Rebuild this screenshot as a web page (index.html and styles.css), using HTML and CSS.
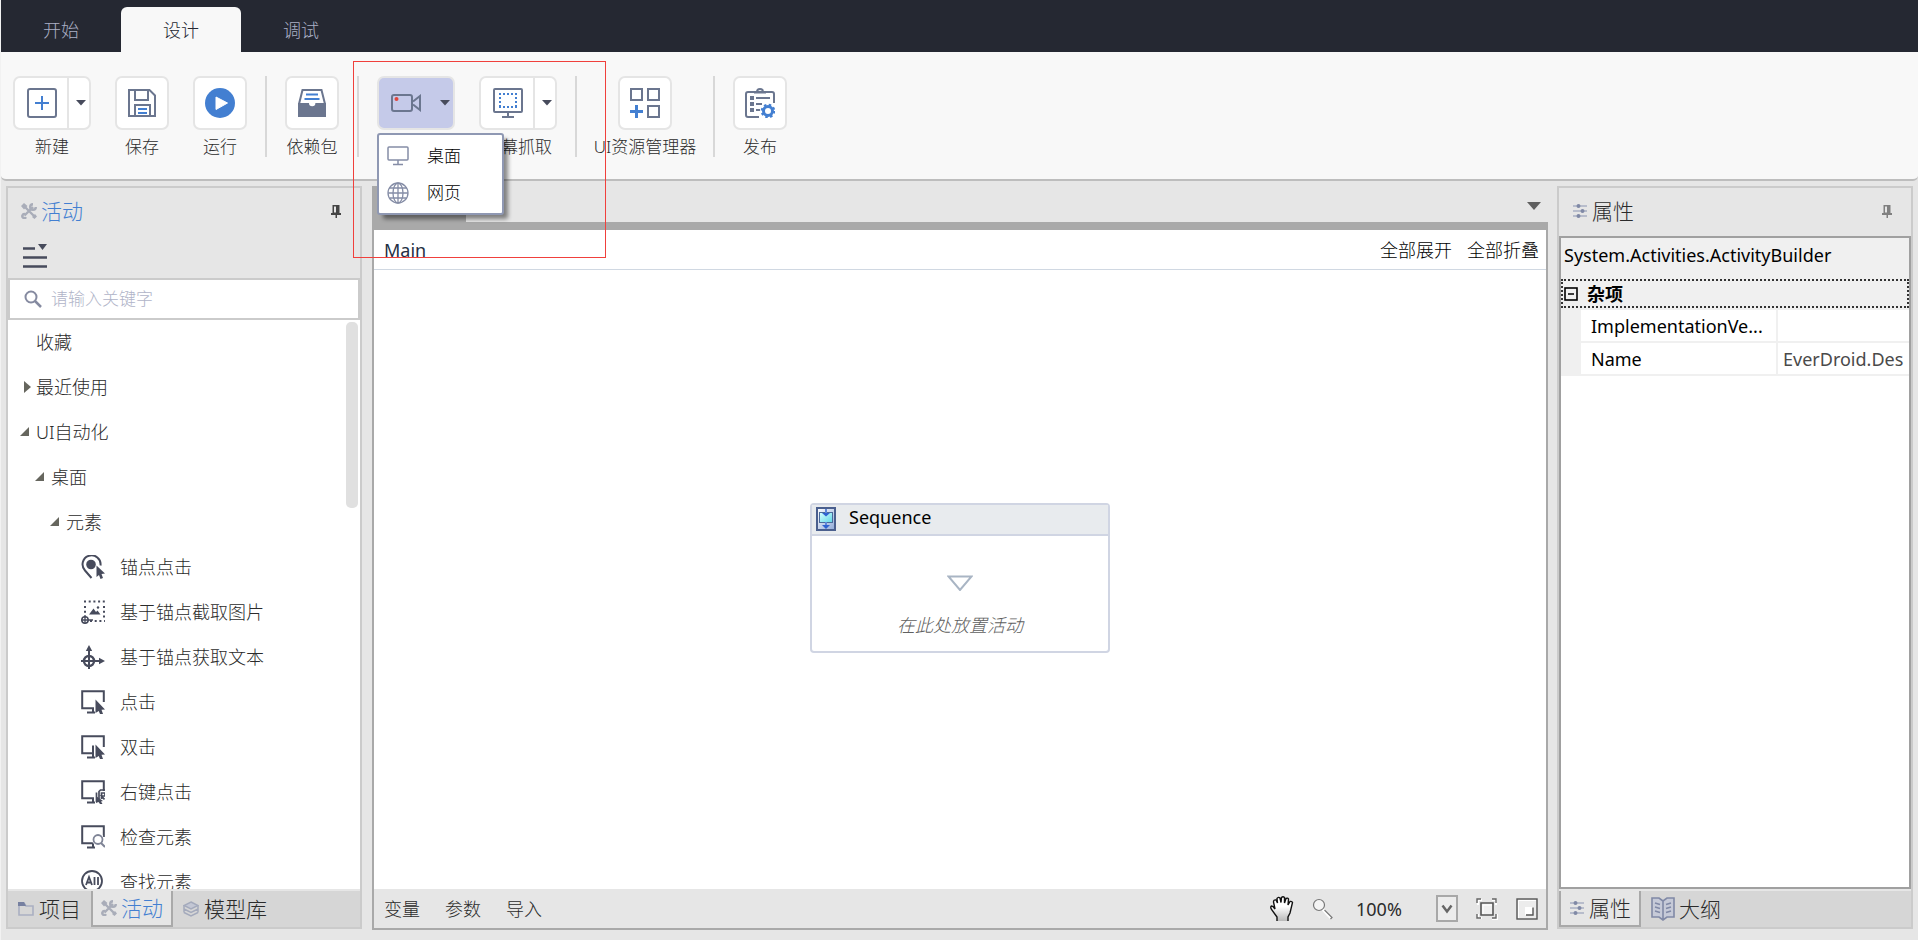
FILE: index.html
```
<!DOCTYPE html>
<html lang="zh-CN">
<head>
<meta charset="utf-8">
<meta name="viewport" content="width=device-width, initial-scale=1">
<title>Main</title>
<link rel="stylesheet" href="styles.css">
</head>
<body>
<svg class="defs" aria-hidden="true">
  <symbol id="i-tools" viewBox="0 0 16 16">
    <path d="M3.500 3.500 13 13M3.500 12.500 12 4" fill="none" stroke="currentColor" stroke-width="2.400"/>
    <path d="M0 3 3 0 6.500 3 3 6.500z M11 14 14 11 16 13.500 13.500 16z" fill="currentColor"/>
    <path d="M12 1.200a2.800 2.800 0 1 0 2.800 2.800M4 11.200a2 2 0 1 0 1 3" fill="none" stroke="currentColor" stroke-width="2.400"/>
  </symbol>
  <symbol id="i-sliders" viewBox="0 0 16 16">
    <path d="M1 3h14M1 8h14M1 13h14" stroke="#a9b0c4" stroke-width="1.500"/>
    <path d="M4.500 3a2 2 0 1 0 4 0 2 2 0 1 0-4 0M8.500 8a2 2 0 1 0 4 0 2 2 0 1 0-4 0M4.500 13a2 2 0 1 0 4 0 2 2 0 1 0-4 0" fill="#8089a6"/>
  </symbol>
  <symbol id="i-pin" viewBox="0 0 10 13">
    <path d="M1.500 0h7v8H10v2H6v3H4.500v-3H0V8h1.500z" fill="currentColor"/>
    <path d="M3 1.500h2v6H3z" fill="#e6e6e6"/>
  </symbol>
  <symbol id="i-screen" viewBox="0 0 24 24">
    <path d="M13 18.200H1.200V1.200h21.600V12M12 18v4M6 22.500h8" fill="none" stroke="currentColor" stroke-width="2"/>
  </symbol>
  <symbol id="i-caret" viewBox="0 0 10 6"><path d="M0 0h10L5 5.500z" fill="#474b5c"/></symbol>
</svg>

<div class="app">
  <nav class="tabs" aria-label="主菜单">
    <button class="tab" type="button">开始</button>
    <button class="tab tab-active" type="button">设计</button>
    <button class="tab" type="button">调试</button>
  </nav>

  <header class="ribbon">
    <div class="tool-group">
      <div class="tool">
        <div class="tile split">
          <button class="tile-main" type="button" aria-label="新建">
            <svg width="30" height="30" viewBox="0 0 30 30"><rect x="1" y="1" width="28" height="28" rx="2" fill="none" stroke="#6b768f" stroke-width="2"/><path d="M15 8v14M8 15h14" stroke="#437fd1" stroke-width="2"/></svg>
          </button>
          <button class="tile-drop" type="button" aria-label="新建选项"><svg width="10" height="6"><use href="#i-caret"/></svg></button>
        </div>
        <span class="tool-label">新建</span>
      </div>
      <button class="tool" type="button">
        <span class="tile">
          <svg width="28" height="28" viewBox="0 0 28 28" fill="none" stroke="#6b768f" stroke-width="2"><path d="M1 1h20.500L27 6.500V27H1z"/><path d="M7 1v10h13V1M7 27V16h15v11"/><path d="M10 20h9M10 24h9" stroke="#437fd1"/></svg>
        </span>
        <span class="tool-label">保存</span>
      </button>
      <button class="tool" type="button">
        <span class="tile">
          <svg width="30" height="30" viewBox="0 0 30 30"><circle cx="15" cy="15" r="15" fill="#437fd1"/><path d="M11 9v12.500L22.500 15z" fill="#fff" stroke="#fff" stroke-linejoin="round"/></svg>
        </span>
        <span class="tool-label">运行</span>
      </button>
    </div>
    <div class="tool-group">
      <button class="tool" type="button">
        <span class="tile">
          <svg width="28" height="28" viewBox="0 0 28 28"><path d="M1 15 4.500 1h19L27 15" fill="none" stroke="#6b768f" stroke-width="2"/><path d="M8 5.500h12M6.500 10h15" stroke="#437fd1" stroke-width="2"/><path d="M0 14h11a3.200 3.200 0 0 0 6.400 0H28v14H0z" fill="#6b768f"/></svg>
        </span>
        <span class="tool-label">依赖包</span>
      </button>
    </div>
    <div class="tool-group">
      <div class="tool tool-open">
        <div class="tile split tile-on">
          <button class="tile-main" type="button" aria-label="录制">
            <svg width="30" height="18" viewBox="0 0 30 18" fill="none" stroke="#6b768f" stroke-width="2"><rect x="1" y="1" width="20" height="16" rx="2"/><path d="M22 7.500 29 2v14l-7-5.500"/><circle cx="5.500" cy="5" r="2" fill="#e0453c" stroke="none"/></svg>
          </button>
          <button class="tile-drop" type="button" aria-label="录制选项" aria-expanded="true"><svg width="10" height="6"><use href="#i-caret"/></svg></button>
        </div>
        <div class="menu" role="menu">
          <button class="menu-item" type="button" role="menuitem">
            <svg width="22" height="20" viewBox="0 0 22 20" fill="none" stroke="#858da6" stroke-width="1.500"><rect x="1" y="1" width="20" height="13" rx="1"/><path d="M11 14v4M6 18.500h10"/></svg>
            桌面
          </button>
          <button class="menu-item" type="button" role="menuitem">
            <svg width="22" height="22" viewBox="0 0 22 22" fill="none" stroke="#858da6" stroke-width="1.300"><circle cx="11" cy="11" r="10"/><ellipse cx="11" cy="11" rx="5" ry="10"/><path d="M11 1v20M1 11h20M2.500 6h17M2.500 16h17"/></svg>
            网页
          </button>
        </div>
      </div>
      <div class="tool">
        <div class="tile split">
          <button class="tile-main" type="button" aria-label="屏幕抓取">
            <svg width="30" height="30" viewBox="0 0 30 30" fill="none" stroke="#6b768f" stroke-width="2"><rect x="1" y="1" width="28" height="23" rx="1"/><path d="M15 24v5M9 29h12"/><path d="M6 6h18M6 19h18" stroke="#437fd1" stroke-dasharray="2 2"/><path d="M7 9v9M23 9v9" stroke="#437fd1" stroke-dasharray="2 2"/></svg>
          </button>
          <button class="tile-drop" type="button" aria-label="屏幕抓取选项"><svg width="10" height="6"><use href="#i-caret"/></svg></button>
        </div>
        <span class="tool-label">屏幕抓取</span>
      </div>
    </div>
    <div class="tool-group">
      <button class="tool tool-wide" type="button">
        <span class="tile">
          <svg width="30" height="30" viewBox="0 0 30 30" fill="none" stroke="#6b768f" stroke-width="2"><path d="M1 1h11v11H1zM18 1h11v11H18zM18 18h11v11H18z"/><path d="M6.500 17v13M0 23.500h13" stroke="#437fd1" stroke-width="3"/></svg>
        </span>
        <span class="tool-label">UI资源管理器</span>
      </button>
    </div>
    <div class="tool-group">
      <button class="tool" type="button">
        <span class="tile">
          <svg width="30" height="30" viewBox="0 0 30 30" fill="none" stroke="#6b768f" stroke-width="2"><path d="M14 29H3a2 2 0 0 1-2-2V6a2 2 0 0 1 2-2h24a2 2 0 0 1 2 2v9"/><path d="M9 4.500h12M12 4a3 3 0 0 1 6 0"/><path d="M5 10h4M5 16h4M5 22h4" stroke-width="4"/><path d="M11 10h14M11 16h6M11 22h4"/><circle cx="23" cy="23" r="4.500" stroke="#437fd1" stroke-width="3"/><circle cx="23" cy="23" r="6.300" stroke="#437fd1" stroke-width="2" stroke-dasharray="2.500 2.450"/></svg>
        </span>
        <span class="tool-label">发布</span>
      </button>
    </div>
  </header>

  <div class="workspace">
    <aside class="panel side-left">
      <div class="panel-head">
        <svg class="tools-icon" width="16" height="16"><use href="#i-tools"/></svg>
        <h2 class="panel-title title-on">活动</h2>
        <button class="pin" type="button" aria-label="固定"><svg width="10" height="13"><use href="#i-pin"/></svg></button>
      </div>
      <button class="filter" type="button" aria-label="筛选">
        <svg width="24" height="24" viewBox="0 0 24 24"><path d="M0 4.500h12M0 13.500h24M0 22.500h24" stroke="#474b5c" stroke-width="2.500"/><path d="M15 0h9l-4.500 6z" fill="#474b5c"/></svg>
      </button>
      <label class="search">
        <svg width="18" height="18" viewBox="0 0 18 18" fill="none" stroke="#858aa0"><circle cx="7" cy="7" r="5.500" stroke-width="2"/><path d="M11 11l6 6" stroke-width="2.500"/></svg>
        <input class="search-input" type="search" placeholder="请输入关键字" aria-label="请输入关键字">
      </label>
      <div class="tree-wrap">
        <ul class="tree">
          <li><button class="node" type="button"><span class="twist"></span>收藏</button></li>
          <li><button class="node" type="button"><span class="twist closed"></span>最近使用</button></li>
          <li><button class="node" type="button"><span class="twist open"></span>UI自动化</button></li>
          <li><button class="node level-2" type="button"><span class="twist open"></span>桌面</button></li>
          <li><button class="node level-3" type="button"><span class="twist open"></span>元素</button></li>
          <li><button class="node leaf" type="button">
            <svg width="24" height="24" viewBox="0 0 24 24"><path d="M10.500 23 4 15.500a9 9 0 1 1 15.500-5" fill="none" stroke="#474b5c" stroke-width="2"/><circle cx="10" cy="9.500" r="4.800" fill="#474b5c"/><path d="M15.500 10.500l8.500 8-3.500.5 1.500 4-2.500 1-1.500-4-2.500 2z" fill="#474b5c"/></svg>锚点点击</button></li>
          <li><button class="node leaf" type="button">
            <svg width="24" height="24" viewBox="0 0 24 24" fill="none" stroke="#474b5c"><path d="M3 1.500h21M9 21h15" stroke-width="2" stroke-dasharray="2 2.700"/><path d="M4 6v12M23 6v12" stroke-width="2" stroke-dasharray="2 2.700"/><circle cx="4" cy="20" r="3.200" stroke-width="1.500"/><path d="M0 20h12M4 15.500V24" stroke-width="1.300"/><path d="M8 14.500l4.500-6 2.500 3.500 1.500-1.500 3 4z" fill="#474b5c" stroke="none"/><circle cx="17" cy="7.500" r="1.200" fill="#474b5c" stroke="none"/></svg>基于锚点截取图片</button></li>
          <li><button class="node leaf" type="button">
            <svg width="24" height="24" viewBox="0 0 24 24" fill="none" stroke="#474b5c" stroke-width="2.400"><circle cx="8" cy="16" r="5"/><path d="M8 4v20M0 16h18" stroke-width="2"/><path d="M8 0l3.200 6H4.800zM24 16l-6 3.200v-6.400z" fill="#474b5c" stroke="none"/></svg>基于锚点获取文本</button></li>
          <li><button class="node leaf" type="button">
            <svg class="ink" width="24" height="24" viewBox="0 0 24 24"><use href="#i-screen"/><path d="M14.500 9.500 24 19.500l-3.500.3L22 24h-3l-1.300-3-3.200 2z" fill="#474b5c"/></svg>点击</button></li>
          <li><button class="node leaf" type="button">
            <svg class="ink" width="24" height="24" viewBox="0 0 24 24"><use href="#i-screen"/><path d="M12 10.500v11" stroke="#474b5c" stroke-width="2"/><path d="M14.500 9.500 24 19.500l-3.500.3L22 24h-3l-1.300-3-3.200 2z" fill="#474b5c"/></svg>双击</button></li>
          <li><button class="node leaf" type="button">
            <svg class="ink" width="24" height="24" viewBox="0 0 24 24"><use href="#i-screen"/><path d="M14 11h10v13H14z" fill="#fff"/><path d="M15.500 22v-9.500M18 21v-9.500l1.500-1.500H24M20.500 19v-6H24v3h-3.500l3 3.500" fill="none" stroke="#474b5c" stroke-width="1.700"/><path d="M15 16l7 5-2 .5 1.500 2.500h-2.500L17.500 22 15 23z" fill="#474b5c"/></svg>右键点击</button></li>
          <li><button class="node leaf" type="button">
            <svg class="ink" width="24" height="24" viewBox="0 0 24 24"><use href="#i-screen"/><circle cx="17" cy="14.500" r="6" fill="#fff"/><circle cx="17" cy="14.500" r="4.500" fill="none" stroke="#7f8496" stroke-width="1.800"/><path d="M20 18l4 4" stroke="#7f8496" stroke-width="2"/></svg>检查元素</button></li>
          <li><button class="node leaf" type="button">
            <svg width="24" height="24" viewBox="0 0 24 24" fill="none" stroke="#474b5c" stroke-width="1.800"><circle cx="11" cy="11" r="10"/><path d="M5 15l3-8 3 8M6.200 12.500h3.600M13.500 7v8M17 7v8"/></svg>查找元素</button></li>
        </ul>
        <span class="thumb"></span>
      </div>
      <div class="dock">
        <button class="dock-tab" type="button"><svg width="16" height="14" viewBox="0 0 16 14" fill="none"><path d="M1 2v11h14V4H8L6 1H1z" stroke="#aab0c2" stroke-width="1.600"/><path d="M0 0h6l2 4H0z" fill="#7680a0"/></svg>项目</button>
        <button class="dock-tab dock-on title-on" type="button"><svg class="tools-icon" width="16" height="16"><use href="#i-tools"/></svg>活动</button>
        <button class="dock-tab" type="button"><svg width="16" height="16" viewBox="0 0 16 16" fill="none" stroke="#a4aabc" stroke-width="1.500"><path d="M8 1l7 3.500L8 8 1 4.500z" fill="#c3c7d4"/><path d="M1 8l7 3.500L15 8M1 11.500 8 15l7-3.500M1 4.500v7M15 4.500v7"/></svg>模型库</button>
      </div>
    </aside>

    <main class="editor">
      <div class="doc-strip">
        <span class="doc-tab"></span>
        <button class="doc-list" type="button" aria-label="文档列表"><svg width="14" height="8" viewBox="0 0 14 8"><path d="M0 0h14L7 8z" fill="#606060"/></svg></button>
      </div>
      <div class="doc">
        <div class="crumbs">
          <span class="crumb">Main</span>
          <button class="crumb-btn" type="button">全部展开</button>
          <button class="crumb-btn" type="button">全部折叠</button>
        </div>
        <div class="canvas">
          <section class="seq">
            <h3 class="seq-head">
              <svg width="20" height="24" viewBox="0 0 20 24"><defs><linearGradient id="g1" x1="0" y1="0" x2="1" y2="1"><stop offset="0" stop-color="#fff"/><stop offset="1" stop-color="#8fa9d8"/></linearGradient><linearGradient id="g2" x1="0" y1="0" x2="1" y2="1"><stop offset="0" stop-color="#d8ffff"/><stop offset="1" stop-color="#5fd6e6"/></linearGradient></defs><rect x="1" y="1" width="18" height="22" fill="url(#g1)" stroke="#4a5f8e" stroke-width="2"/><rect x="3.500" y="5.500" width="13" height="10" fill="url(#g2)" stroke="#4a6a9a"/><path d="M10 2v5M10 15v4" stroke="#5f86d8" stroke-width="2"/><path d="M6 6h8l-4 3.500zM6 18h8l-4 4z" fill="#2f62d0"/></svg>
              Sequence
            </h3>
            <div class="seq-body">
              <svg width="26" height="16" viewBox="0 0 26 16"><path d="M1.500 1.500h23L13 15z" fill="none" stroke="#a9b5c4" stroke-width="2"/></svg>
              <p class="seq-hint">在此处放置活动</p>
            </div>
          </section>
        </div>
        <div class="status">
          <button class="status-btn" type="button">变量</button>
          <button class="status-btn" type="button">参数</button>
          <button class="status-btn" type="button">导入</button>
          <span class="status-tools">
            <button class="icon-btn" type="button" aria-label="平移"><svg width="24" height="26" viewBox="0 0 24 26"><defs><linearGradient id="g3" x1="0" y1="0" x2="0" y2="1"><stop offset=".4" stop-color="#fff"/><stop offset="1" stop-color="#b8b8b8"/></linearGradient></defs><path d="M7 25v-4l-5.500-7.500Q0 10.500 1.500 10l1.500.5 2 2.500-1.500-7Q3.500 3.500 6 4l1.500 3-.5-4.500Q8.500.5 10 2l1 4.500.5-5q1.500-1.500 3 0v5.500l1.500-4.500q2-1 2.500.5L18 9l2-3.500q2-.5 2.500 1L20 17l-2 4v4" fill="url(#g3)" stroke="#111" stroke-width="1.400"/></svg></button>
            <button class="icon-btn" type="button" aria-label="缩放"><svg width="22" height="22" viewBox="0 0 22 22"><circle cx="7" cy="7" r="5.500" fill="#f4f4f4" stroke="#777" stroke-width="1.200"/><path d="M11 11.500l8 8.500" stroke="#fff" stroke-width="3"/><path d="M12.500 12l7.500 7.500-1.500 1.500" fill="none" stroke="#777" stroke-width="1.200"/></svg></button>
            <span class="zoom">
              <select class="zoom-select" aria-label="缩放比例"><option>100%</option></select>
              <svg class="zoom-arrow" width="22" height="27" viewBox="0 0 22 27"><rect x="1" y="1" width="20" height="25" fill="#ececec" stroke="#a8a8a8" stroke-width="2"/><path d="M6.500 10.500l4.500 6 4.500-6" fill="none" stroke="#666" stroke-width="2.500"/></svg>
            </span>
            <button class="icon-btn" type="button" aria-label="适合屏幕"><svg width="22" height="22" viewBox="0 0 22 22" fill="none"><path d="M2 7V2h4M16 2h4v5M21 16v5h-5M6 20H2v-4" stroke="#fff" stroke-width="2"/><path d="M1 5V1h4M16 1h4v4M20 16v4h-4M5 20H1v-4" stroke="#666" stroke-width="1.400"/><path d="M5 5h12v12H5z" fill="#f0f0f0" stroke="#555" stroke-width="1.600"/><path d="M7 16V7h9" stroke="#fff"/></svg></button>
            <button class="icon-btn" type="button" aria-label="概览"><svg width="22" height="22" viewBox="0 0 22 22" fill="none"><rect x="1" y="1" width="20" height="20" fill="#ececec" stroke="#555" stroke-width="1.400"/><path d="M2.500 20V2.500H20" stroke="#fff"/><path d="M9 9h8v8H9z" fill="#fff"/><path d="M17 9.500V17H10" stroke="#555" stroke-width="1.400"/></svg></button>
          </span>
        </div>
      </div>
    </main>

    <aside class="panel side-right">
      <div class="panel-head">
        <svg width="16" height="16"><use href="#i-sliders"/></svg>
        <h2 class="panel-title">属性</h2>
        <button class="pin pin-dim" type="button" aria-label="固定"><svg width="10" height="13"><use href="#i-pin"/></svg></button>
      </div>
      <div class="props">
        <p class="props-type">System.Activities.ActivityBuilder</p>
        <button class="props-cat" type="button"><svg width="14" height="14" viewBox="0 0 14 14" fill="none" stroke="#000"><rect x="1" y="1" width="12" height="12" stroke-width="1.600"/><path d="M4 7h6" stroke-width="1.500"/></svg>杂项</button>
        <table class="props-table">
          <tr><td class="gutter"></td><th scope="row">ImplementationVe...</th><td></td></tr>
          <tr><td class="gutter"></td><th scope="row">Name</th><td class="value">EverDroid.Des</td></tr>
        </table>
      </div>
      <div class="dock">
        <button class="dock-tab dock-on" type="button"><svg width="16" height="16"><use href="#i-sliders"/></svg>属性</button>
        <button class="dock-tab dock-book" type="button"><svg width="24" height="24" viewBox="0 0 24 24" fill="none" stroke="#8089a6" stroke-width="1.600"><path d="M12 4 8 1H1v19h7l4 3 4-3h7V1h-7zM12 4v19" fill="#c6cad8"/><path d="M4 6l5 1.500M4 10l5 1.500M4 14l5 1.500M20 6l-5 1.500M20 10l-5 1.500M20 14l-5 1.500"/></svg>大纲</button>
      </div>
    </aside>
  </div>
  <div class="marker"></div>
</div>
</body>
</html>
```
FILE: styles.css
```
* { box-sizing: border-box; }

body {
  margin: 0;
  background: #f2f2f2;
  color: #2b2b2b;
  font-family: "Noto Sans", "Noto Sans CJK SC", sans-serif;
  font-size: 18px;
  font-weight: 300;
  line-height: 24px;
}

button, input, select {
  margin: 0;
  padding: 0;
  border: 0;
  background: none;
  color: inherit;
  font: inherit;
}

h2, h3, p, ul { margin: 0; padding: 0; font-size: inherit; font-weight: inherit; }
ul { list-style: none; }
svg { display: block; flex: none; }
.defs { position: absolute; width: 0; height: 0; }

.app {
  position: relative;
  display: flex;
  flex-direction: column;
  height: 100vh;
  margin-left: 1px;
  background: #e6e6e6;
}

/* Top tabs */
.tabs {
  display: flex;
  flex: none;
  padding-top: 7px;
  background: #252832;
}
.tab {
  width: 120px;
  height: 45px;
  color: #abb0c6;
}
.tab-active {
  border-radius: 6px 6px 0 0;
  background: #f8f8f8;
  color: #252832;
}

/* Ribbon */
.ribbon {
  display: flex;
  flex: none;
  padding: 24px 12px 22px;
  border-bottom: 2px solid #bdbdbd;
  border-radius: 0 0 5px 5px;
  background: #f8f8f8;
}
.tool-group { display: flex; gap: 24px; }
.tool-group + .tool-group {
  margin-left: 18px;
  padding-left: 18px;
  border-left: 2px solid #d8d8d8;
}
.tool {
  display: flex;
  flex-direction: column;
  align-items: center;
  gap: 7px;
}
.tool-open { position: relative; z-index: 2; }
.tool-wide { width: 100px; }
.tile {
  display: flex;
  align-items: center;
  justify-content: center;
  width: 54px;
  height: 54px;
  border: 2px solid #e5e5e5;
  border-radius: 7px;
  background: #fff;
}
.split { width: 78px; }
.tile-main, .tile-drop {
  display: flex;
  align-items: center;
  justify-content: center;
  height: 100%;
}
.tile-main { flex: 1; padding-left: 2px; }
.tile-drop { width: 22px; padding-left: 4px; border-left: 2px solid #e5e5e5; }
.tile-on { background: #c5cae9; }
.tile-on .tile-drop { border-color: transparent; }
.tool-label {
  font-size: 17px;
  line-height: 20px;
  white-space: nowrap;
}

.menu {
  position: absolute;
  top: 57px;
  left: 0;
  width: 127px;
  padding: 2px 0;
  border: 2px solid #8f98b3;
  border-radius: 3px;
  background: #fff;
  box-shadow: 5px 5px 4px -1px rgba(0, 0, 0, .45);
}
.menu-item {
  display: flex;
  align-items: center;
  gap: 18px;
  width: 100%;
  height: 37px;
  padding-left: 8px;
  color: #000;
  font-size: 17px;
}

/* Docked panels */
.workspace {
  display: flex;
  flex: 1;
  gap: 10px;
  min-height: 0;
  padding: 5px 5px 11px;
}
.panel {
  display: flex;
  flex: none;
  flex-direction: column;
  width: 356px;
  border: 2px solid #cbcbcb;
}
.panel-head {
  display: flex;
  flex: none;
  align-items: center;
  gap: 4px;
  height: 48px;
  padding: 0 19px 2px 13px;
}
.panel-title { flex: 1; font-size: 21px; }
.title-on { color: #437fd1; }
.tools-icon { color: #a9adb9; }
.pin { color: #444; }
.pin-dim { color: #808080; }
.filter { align-self: flex-start; height: 42px; padding: 0 15px 2px; }

.search {
  display: flex;
  flex: none;
  align-items: center;
  gap: 9px;
  height: 42px;
  padding: 0 14px;
  border: 2px solid #cbcbcb;
  background: #fff;
}
.search-input { flex: 1; min-width: 0; font-size: 17px; outline: 0; }
.search-input::placeholder { color: #b0b4c8; opacity: 1; }

.tree-wrap {
  position: relative;
  flex: 1;
  min-height: 0;
  overflow: hidden;
  background: #fff;
}
.node {
  display: flex;
  align-items: center;
  width: 100%;
  height: 45px;
  padding: 0 0 2px 12px;
}
.level-2 { padding-left: 27px; }
.level-3 { padding-left: 42px; }
.leaf { gap: 15px; padding-left: 73px; }
.twist { flex: none; width: 16px; }
.twist::before { content: ""; display: block; width: 0; }
.open::before {
  border-bottom: 9px solid #66665e;
  border-left: 9px solid transparent;
}
.closed::before {
  margin-left: 4px;
  border: 6px solid transparent;
  border-right: 0;
  border-left: 7px solid #66665e;
}
.ink { color: #474b5c; }
.thumb {
  position: absolute;
  top: 2px;
  right: 2px;
  width: 12px;
  height: 186px;
  border-radius: 5px;
  background: #e0e0e0;
}

.dock {
  display: flex;
  flex: none;
  height: 38px;
  border-top: 2px solid #e6e6e6;
  background: #d6d6d6;
}
.dock-tab {
  display: flex;
  align-items: center;
  gap: 5px;
  padding: 0 10px;
  font-size: 21px;
}
.dock-on {
  gap: 4px;
  padding: 0 8px;
  border: 2px solid #a9a9a9;
  border-top: 0;
  background: #e6e6e6;
}

/* Editor */
.editor {
  display: flex;
  flex: 1;
  flex-direction: column;
  min-width: 0;
  margin: 0 -1px -1px 0;
}
.doc-strip { display: flex; flex: none; justify-content: space-between; height: 36px; }
.doc-tab { width: 94px; background: #a9a9a9; }
.doc-list { padding: 4px 7px 0; }
.doc {
  display: flex;
  flex: 1;
  flex-direction: column;
  min-height: 0;
  border: 2px solid #a9a9a9;
  border-top-width: 8px;
}
.crumbs {
  display: flex;
  flex: none;
  align-items: center;
  gap: 15px;
  height: 40px;
  padding: 0 7px 0 10px;
  border-bottom: 1px solid #d0d8e2;
  background: #fff;
}
.crumb { flex: 1; color: #252f44; font-weight: 400; }
.crumb-btn { color: #000; }
.canvas {
  display: flex;
  flex: 1;
  align-items: center;
  justify-content: center;
  min-height: 0;
  padding-bottom: 4px;
  background: #fff;
}
.seq {
  width: 300px;
  border: 2px solid #d0d5e3;
  border-radius: 4px;
}
.seq-head {
  display: flex;
  gap: 13px;
  height: 31px;
  padding: 2px 4px;
  border-bottom: 2px solid #d0d5e3;
  background: #e8ebee;
  color: #000;
  font-weight: 400;
  line-height: 20px;
}
.seq-body {
  display: flex;
  flex-direction: column;
  align-items: center;
  gap: 22px;
  padding: 39px 0 14px;
}
.seq-hint { color: #606060; font-style: italic; }

.status {
  display: flex;
  flex: none;
  align-items: center;
  gap: 25px;
  height: 39px;
  padding: 0 8px 0 10px;
}
.status-tools { display: flex; align-items: center; gap: 18px; margin-left: auto; }
.zoom { position: relative; margin-left: 4px; }
.zoom-select { display: block; width: 102px; height: 27px; appearance: none; font-weight: 400; }
.zoom-arrow { position: absolute; top: 0; right: 0; pointer-events: none; }

/* Property grid */
.props {
  flex: 1;
  min-height: 0;
  overflow: hidden;
  border: 2px solid #a0a0a0;
  background: #fff;
  color: #000;
  font-weight: 400;
}
.props-type { padding: 5px 3px 12px; background: #f0f0f0; }
.props-cat {
  display: flex;
  align-items: center;
  gap: 9px;
  width: 100%;
  height: 29px;
  padding-left: 1px;
  border: 2px dotted #333;
  background: #f0f0f0;
  font-weight: 700;
}
.props-table {
  width: 100%;
  border-top: 2px solid #f0f0f0;
  border-collapse: collapse;
  table-layout: fixed;
}
.props-table td, .props-table th {
  height: 33px;
  padding: 0;
  border-bottom: 2px solid #f0f0f0;
  font-weight: 400;
  text-align: left;
  white-space: nowrap;
}
.props-table th { width: 196px; padding-left: 10px; border-right: 2px solid #f0f0f0; }
.props-table .gutter { width: 20px; background: #f0f0f0; }
.props-table .value { padding-left: 5px; color: #4a4a4a; }
.dock-book { gap: 4px; }

/* Highlight frame over the recording tools */
.marker {
  position: absolute;
  top: 61px;
  left: 352px;
  z-index: 3;
  width: 253px;
  height: 197px;
  border: 1px solid #f0403c;
  pointer-events: none;
}
```
